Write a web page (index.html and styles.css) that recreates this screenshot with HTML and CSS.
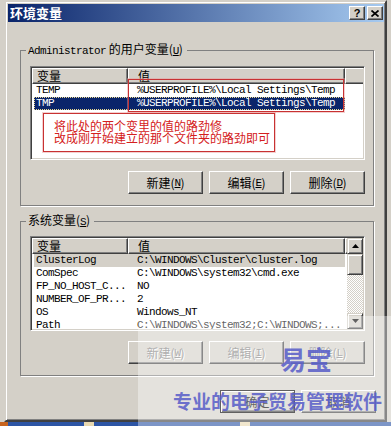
FILE: index.html
```html
<!DOCTYPE html>
<html lang="zh-CN">
    <head>
        <meta charset="UTF-8" />
        <title>环境变量</title>
        <link rel="stylesheet" href="styles.css">
    </head>
    <body>
        <div class="dialog">
            <div class="titlebar">
                <span class="title">环境变量</span>
                <div class="caption-btns">
                    <span class="cap-btn help">?</span>
                    <span class="cap-btn close">
                        <svg width="8" height="7" viewBox="0 0 8 7"><path d="M0.5 0.5L7.5 6.5M7.5 0.5L0.5 6.5" stroke="#000" stroke-width="1.7" fill="none"/></svg>
                    </span>
                </div>
            </div>
            <div class="content">
                <fieldset class="group">
                    <legend><span class="en">Administrator</span> 的用户变量(<u class="en">U</u>)</legend>
                    <div class="list user-list">
                        <div class="list-main">
                            <div class="list-head">
                                <span class="hcol col1">变量</span>
                                <span class="hcol col2">值</span>
                                <span class="hcol fill"></span>
                            </div>
                            <div class="row"><span class="col1 en">TEMP</span><span class="col2 en">%USERPROFILE%\Local Settings\Temp</span></div>
                            <div class="row selected"><span class="col1 en">TMP</span><span class="col2 en">%USERPROFILE%\Local Settings\Temp</span></div>
                        </div>
                    </div>
                    <div class="btn-row">
                        <button class="btn">新建(<u class="en">N</u>)</button>
                        <button class="btn">编辑(<u class="en">E</u>)</button>
                        <button class="btn">删除(<u class="en">D</u>)</button>
                    </div>
                </fieldset>

                <fieldset class="group sys-group">
                    <legend>系统变量(<u class="en">S</u>)</legend>
                    <div class="list sys-list">
                        <div class="list-main">
                            <div class="list-head">
                                <span class="hcol col1">变量</span>
                                <span class="hcol col2">值</span>
                                <span class="hcol fill"></span>
                            </div>
                            <div class="row inactive"><span class="col1 en">ClusterLog</span><span class="col2 en">C:\WINDOWS\Cluster\cluster.log</span></div>
                            <div class="row"><span class="col1 en">ComSpec</span><span class="col2 en">C:\WINDOWS\system32\cmd.exe</span></div>
                            <div class="row"><span class="col1 en">FP_NO_HOST_C...</span><span class="col2 en">NO</span></div>
                            <div class="row"><span class="col1 en">NUMBER_OF_PR...</span><span class="col2 en">2</span></div>
                            <div class="row"><span class="col1 en">OS</span><span class="col2 en">Windows_NT</span></div>
                            <div class="row"><span class="col1 en">Path</span><span class="col2 en">C:\WINDOWS\system32;C:\WINDOWS;...</span></div>
                        </div>
                        <div class="scrollbar">
                            <span class="sb-btn"><svg width="7" height="4" viewBox="0 0 7 4"><path d="M3.5 0L7 4H0z" fill="#000"/></svg></span>
                            <span class="sb-thumb"></span>
                            <span class="sb-track"></span>
                            <span class="sb-btn"><svg width="7" height="4" viewBox="0 0 7 4"><path d="M0 0h7L3.5 4z" fill="#000"/></svg></span>
                        </div>
                    </div>
                    <div class="btn-row">
                        <button class="btn" disabled>新建(<u class="en">W</u>)</button>
                        <button class="btn" disabled>编辑(<u class="en">I</u>)</button>
                        <button class="btn" disabled>删除(<u class="en">L</u>)</button>
                    </div>
                </fieldset>

                <div class="btn-row dialog-btns">
                    <button class="btn default">确定</button>
                    <button class="btn">取消</button>
                </div>
            </div>
        </div>
        <div class="desktop"></div>

        <div class="note note-values"></div>
        <div class="note note-text">将此处的两个变里的值的路劲修<br>改成刚开始建立的那个文件夹的路劲即可</div>

        <div class="wash"></div>
        <div class="wm-logo">易宝</div>
        <div class="wm-slogan">专业的电子贸易管理软件</div>
    </body>
</html>
```

FILE: styles.css
```css
* {
    box-sizing: border-box;
}
body {
    margin: 0;
    width: 391px;
    height: 426px;
    position: relative;
    overflow: hidden;
    background-color: #d4d0c8;
    font-family: "Noto Sans CJK SC", sans-serif;
    font-size: 12px;
    color: #000;
}
.en {
    font-family: "Liberation Mono", monospace;
    font-size: 11px;
    letter-spacing: -0.6px;
}
u.en {
    text-decoration: underline;
}
.dialog {
    margin-left: 4px;
    width: 383px;
    height: 422px;
    padding: 2px 1px 2px 2px;
    border: 2px solid;
    border-color: #d4d0c8 #404040 #404040 #d4d0c8;
    box-shadow: inset 1px 1px 0 #fff, inset -1px -1px 0 #808080;
    background-color: #d4d0c8;
}
.titlebar {
    height: 18px;
    display: flex;
    align-items: center;
    justify-content: space-between;
    padding: 0 1px 0 2px;
    background: linear-gradient(to right, #0a246a, #a6caf0);
}
.title {
    color: #fff;
    font-weight: bold;
    font-size: 13px;
    line-height: 18px;
}
.caption-btns {
    display: flex;
    gap: 2px;
}
.cap-btn {
    width: 16px;
    height: 14px;
    display: flex;
    align-items: center;
    justify-content: center;
    background-color: #d4d0c8;
    border: 1px solid;
    border-color: #fff #404040 #404040 #fff;
    box-shadow: inset -1px -1px 0 #808080;
}
.help {
    font-family: "Liberation Sans", sans-serif;
    font-weight: bold;
    font-size: 11px;
    line-height: 12px;
}
.content {
    padding: 20px 10px 0 12px;
}
.group {
    margin: 0;
    width: 354px;
    padding: 8px 8px 11px 9px;
    border: 1px solid #808080;
    box-shadow: 1px 1px 0 #fff;
}
.group legend {
    margin-left: -4px;
    padding: 0 4px 0 2px;
    line-height: 14px;
}
.sys-group {
    margin-top: 7px;
    padding-top: 7px;
}
.list {
    display: flex;
    width: 335px;
    height: 94px;
    padding: 1px;
    border: 1px solid;
    border-color: #808080 #fff #fff #808080;
    box-shadow: inset 1px 1px 0 #404040, inset -1px -1px 0 #d4d0c8;
    background-color: #fff;
}
.sys-list {
    height: 95px;
}
.list-main {
    flex: 1;
    overflow: hidden;
}
.list-head {
    display: flex;
    height: 16px;
}
.hcol {
    height: 16px;
    line-height: 14px;
    padding-left: 4px;
    background-color: #d4d0c8;
    border: 1px solid;
    border-color: #fff #404040 #404040 #fff;
    box-shadow: inset -1px -1px 0 #808080;
}
.list-head .col1 {
    width: 96px;
}
.list-head .col2 {
    width: 217px;
    padding-left: 9px;
}
.list-head .fill {
    flex: 1;
    padding: 0;
    border-right: none;
    box-shadow: inset 0 -1px 0 #808080;
}
.row {
    display: flex;
    height: 13px;
    line-height: 13px;
    margin-left: 2px;
    width: 311px;
    white-space: nowrap;
}
.row .col1 {
    width: 94px;
    padding-left: 2px;
    overflow: hidden;
}
.row .col2 {
    width: 217px;
    padding-left: 9px;
    overflow: hidden;
}
.row.selected {
    background-color: #0a246a;
    color: #fff;
    outline: 1px dotted #e8d890;
    outline-offset: -1px;
}
.row.inactive {
    background-color: #d4d0c8;
}
.scrollbar {
    width: 16px;
    display: flex;
    flex-direction: column;
}
.sb-btn,
.sb-thumb {
    display: flex;
    align-items: center;
    justify-content: center;
    height: 16px;
    background-color: #d4d0c8;
    border: 1px solid;
    border-color: #d4d0c8 #404040 #404040 #d4d0c8;
    box-shadow: inset 1px 1px 0 #fff, inset -1px -1px 0 #808080;
}
.sb-thumb {
    height: 21px;
}
.sb-track {
    flex: 1;
    background: repeating-conic-gradient(#fff 0 25%, #d4d0c8 0 50%) 0 0 / 2px 2px;
}
.btn-row {
    display: flex;
    justify-content: flex-end;
    gap: 6px;
    margin-top: 11px;
}
.sys-group .btn-row {
    margin-top: 10px;
}
.btn {
    width: 75px;
    height: 23px;
    padding: 0;
    display: flex;
    align-items: center;
    justify-content: center;
    font-family: "Noto Sans CJK SC", sans-serif;
    font-size: 12px;
    color: #000;
    background-color: #d4d0c8;
    border: 1px solid;
    border-color: #fff #404040 #404040 #fff;
    box-shadow: inset -1px -1px 0 #808080;
}
.btn:disabled {
    color: #808080;
    text-shadow: 1px 1px 0 #fff;
}
.dialog-btns {
    margin-top: 14px;
    width: 356px;
}
.btn.default {
    border: 1px solid #000;
    box-shadow: inset 1px 1px 0 #fff, inset -1px -1px 0 #404040, inset -2px -2px 0 #808080;
}
.desktop {
    height: 4px;
    background: linear-gradient(to right, #c8641e 0 8px, #2d55a5 8px 84px, #e8d8b0 84px 94px, #2d55a5 94px 240px, #e8d8b0 240px 250px, #2d55a5 250px);
}
.note {
    position: absolute;
    border: 1px solid #c83232;
    box-shadow: 0 0 0 1px rgba(230, 150, 150, 0.45);
}
.note-values {
    left: 128px;
    top: 79px;
    width: 216px;
    height: 33px;
}
.note-text {
    left: 43px;
    top: 113px;
    width: 232px;
    height: 39px;
    padding: 6px 0 0 10px;
    color: #d42020;
    line-height: 12px;
    white-space: nowrap;
}
.wash {
    position: absolute;
    left: 138px;
    top: 316px;
    right: 0;
    bottom: 0;
    background-color: rgba(255, 255, 255, 0.38);
}
.wm-logo,
.wm-slogan {
    position: absolute;
    font-weight: bold;
    line-height: 1;
    color: rgba(86, 92, 200, 0.85);
    white-space: nowrap;
}
.wm-logo {
    left: 280px;
    top: 346px;
    font-size: 26px;
}
.wm-slogan {
    left: 173px;
    top: 391px;
    font-size: 19px;
}
```
